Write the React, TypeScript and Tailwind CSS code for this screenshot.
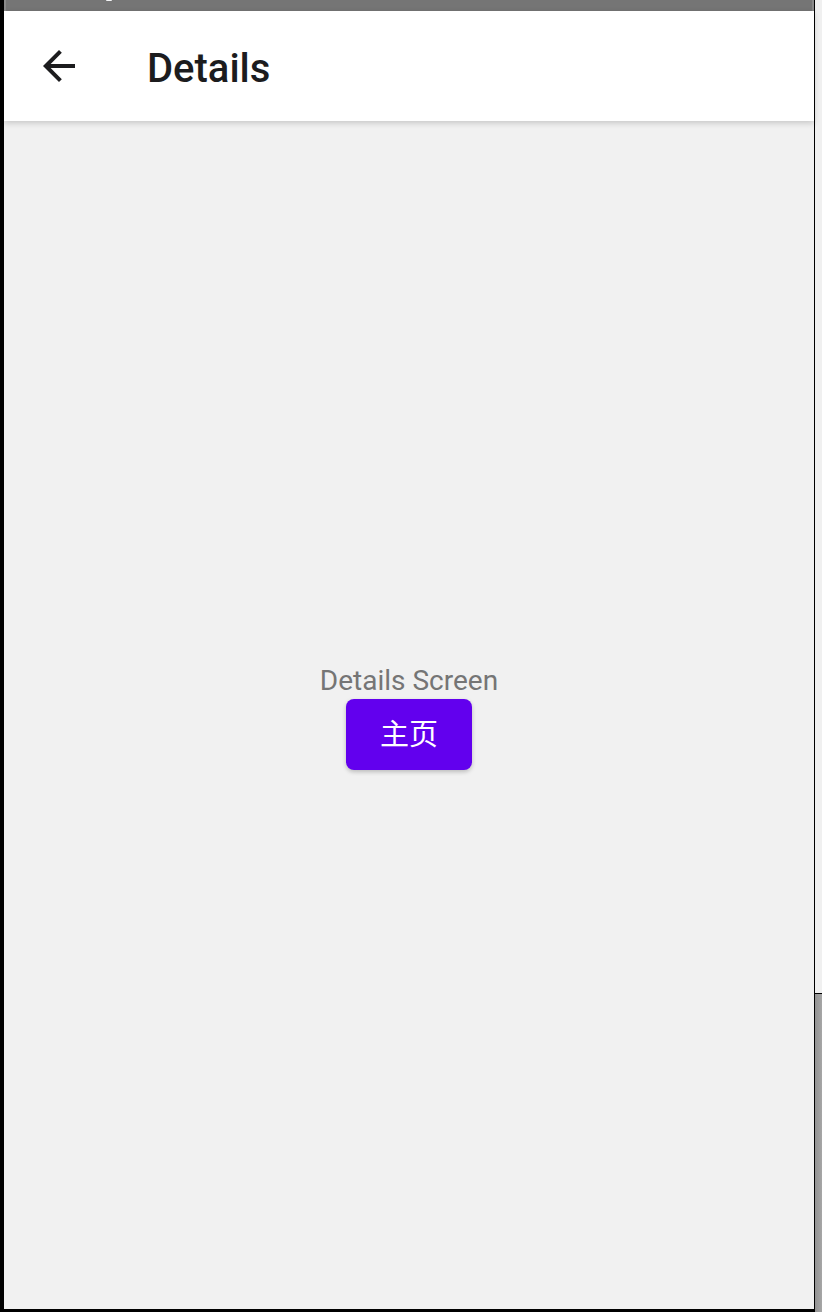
import React from "react";
import { MdArrowBack } from "react-icons/md";

function StatusBar() {
  return (
    <div className="h-[11px] shrink-0 overflow-hidden border-x-2 border-x-[#8a8a8a] bg-[#757575] pl-[100px]">
      <div className="h-px w-1.5 rounded-b-sm bg-gray-100" />
    </div>
  );
}

function AppBar() {
  return (
    <header className="z-10 flex h-[110px] shrink-0 items-center gap-16 bg-white px-[31px] shadow-[0_2px_6px_rgba(0,0,0,0.18)]">
      <button type="button" aria-label="Back" className="text-[#1c1c1e]">
        <MdArrowBack size={48} />
      </button>
      <h1 className="pt-1.5 text-[40px] leading-[48px] font-medium text-[#1c1c1e]">Details</h1>
    </header>
  );
}

function DetailsScreen() {
  return (
    <main className="flex grow flex-col items-center justify-center bg-[#f1f1f1] pt-0.5">
      <p className="text-[28px] leading-9 text-[#757575]">Details Screen</p>
      <button
        type="button"
        className="h-[71px] rounded-lg bg-[#6200ee] px-[34px] pt-0.5 text-[29px] leading-9 text-white shadow-[0_2px_4px_rgba(0,0,0,0.22)]"
      >
        主页
      </button>
    </main>
  );
}

export default function App() {
  return (
    <div className="flex min-h-screen bg-black pl-1 font-['Roboto','Noto_Sans_CJK_SC',sans-serif] antialiased">
      <div className="flex grow flex-col pb-[3px]">
        <StatusBar />
        <AppBar />
        <DetailsScreen />
      </div>
      <aside className="ml-px flex w-[7px] shrink-0 flex-col">
        <div className="grow bg-[#f0f0f0]" />
        <div className="mt-px h-[318px] bg-linear-to-r from-[#929292] to-[#a6a6a6]" />
      </aside>
    </div>
  );
}
